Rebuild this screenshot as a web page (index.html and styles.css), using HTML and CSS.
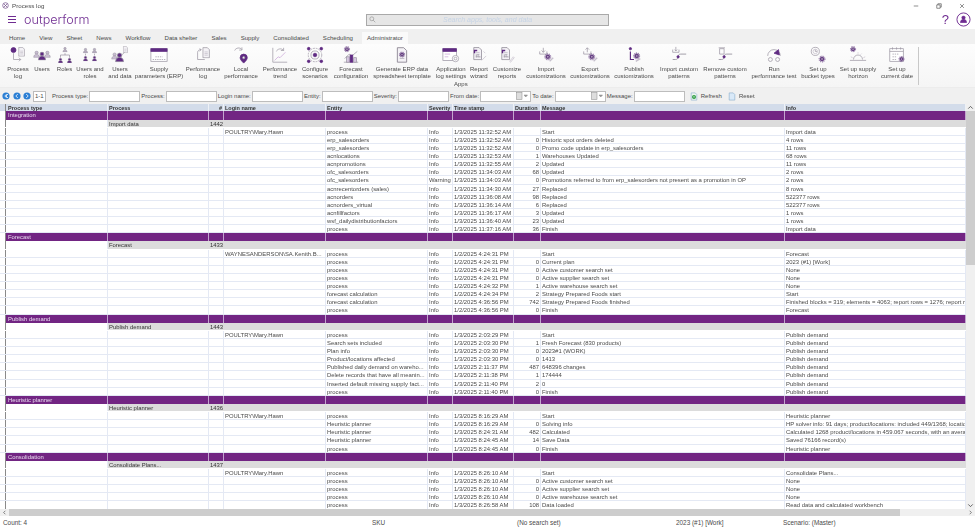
FILE: index.html
```html
<!DOCTYPE html>
<html>

<head>
    <meta charset="UTF-8">
    <title>Process log</title>
    <link rel="stylesheet" href="styles.css">
</head>

<body>
    <!-- Shared icon parts -->
    <svg class="defs">
        <symbol id="gear" viewBox="0 0 10 10">
            <circle cx="5" cy="5" r="3.2" fill="#5f2a82" />
            <circle cx="5" cy="5" r="4.3" fill="none" stroke="#5f2a82" stroke-width="1.2" stroke-dasharray="1.3 1.4" />
            <circle cx="5" cy="5" r="1" fill="#d9c9e4" />
        </symbol>
        <symbol id="person" viewBox="0 0 10 10">
            <circle cx="5" cy="3" r="2.2" />
            <path d="M1 9.6c0-6 8-6 8 0z" />
        </symbol>
        <symbol id="doc" viewBox="0 0 10 14">
            <path d="M1 .7h5.5L9 3.2v10H1z" fill="#f4f2f6" stroke="#8f8a96" stroke-width=".8" />
            <path d="M3 6h4M3 8h4M3 10h4" stroke="#b5b0bb" stroke-width=".7" />
        </symbol>
    </svg>

    <div class="titlebar">
        <div class="title">
            <svg class="app-icon" viewBox="0 0 10 10">
                <circle cx="5" cy="5" r="4" />
                <path d="M2.5 2.5l5 5M7.5 2.5l-5 5" />
            </svg>
            Process log
        </div>
        <div class="window-controls">
            <svg viewBox="0 0 8 8"><path d="M1 4h6" /></svg>
            <svg viewBox="0 0 8 8"><path d="M1 2.5h4.5V7H1zM2.5 2.5V1H7v4.5H5.5" /></svg>
            <svg viewBox="0 0 8 8"><path d="M1.5 1.5l5 5M6.5 1.5l-5 5" /></svg>
        </div>
    </div>

    <div class="appbar">
        <div class="brand">
            <div class="hamburger"><i></i><i></i><i></i></div>
            <div class="logo">outperform</div>
        </div>
        <div class="search">
            <svg viewBox="0 0 10 10"><circle cx="4" cy="4" r="2.8" /><path d="M6 6l3 3" /></svg>
            <span>Search apps, tools, and data</span>
        </div>
        <div class="account">
            <span class="help">?</span>
            <svg class="avatar" viewBox="0 0 16 16">
                <circle cx="8" cy="8" r="7" />
                <use href="#person" x="4" y="3.6" width="8" height="8" fill="#6f2c91" />
            </svg>
        </div>
    </div>

    <div class="tabs">
        <span>Home</span>
        <span>View</span>
        <span>Sheet</span>
        <span>News</span>
        <span>Workflow</span>
        <span>Data shelter</span>
        <span>Sales</span>
        <span>Supply</span>
        <span>Consolidated</span>
        <span>Scheduling</span>
        <span class="active">Administrator</span>
    </div>

    <div class="ribbon">
        <div class="tool">
            <svg viewBox="0 0 20 20"><circle cx="5" cy="4.5" r="2.8" class="p" /><use href="#doc" x="10" y="1" width="8" height="11" /><path d="M5 8v7h8M11 13l2 2-2 2" /></svg>
            <span>Process<br>log</span>
        </div>
        <div class="tool">
            <svg viewBox="0 0 20 20"><use href="#person" x="0" y="5" width="8" height="8" fill="#c9bdd2" /><use href="#person" x="12" y="5" width="8" height="8" fill="#c9bdd2" /><use href="#person" x="5" y="6" width="10" height="10" fill="#5f2a82" /></svg>
            <span>Users</span>
        </div>
        <div class="tool">
            <svg viewBox="0 0 20 20"><use href="#person" x="7" y="1" width="6" height="6" fill="#b9aec2" /><path d="M10 8v2M5 13v-3h10v3" /><use href="#person" x="2" y="13" width="6" height="6" fill="#5f2a82" /><use href="#person" x="12" y="13" width="6" height="6" fill="#5f2a82" /></svg>
            <span>Roles</span>
        </div>
        <div class="tool">
            <svg viewBox="0 0 20 20"><use href="#person" x="2" y="2" width="6" height="6" fill="#b9aec2" /><use href="#person" x="12" y="2" width="6" height="6" fill="#b9aec2" /><use href="#person" x="2" y="11" width="6" height="6" fill="#5f2a82" /><use href="#person" x="12" y="11" width="6" height="6" fill="#5f2a82" /><path d="M5 8.500v2M15 8.500v2" /></svg>
            <span>Users and<br>roles</span>
        </div>
        <div class="tool">
            <svg viewBox="0 0 20 20"><use href="#person" x="0" y="7" width="8" height="8" fill="#c9bdd2" /><use href="#person" x="4" y="7" width="11" height="11" fill="#5f2a82" /><use href="#doc" x="13" y="0" width="6" height="8" /><path d="M12 10l3-3" /></svg>
            <span>Users<br>and data</span>
        </div>
        <div class="tool">
            <svg viewBox="0 0 20 20"><rect x="1" y="3" width="18" height="14" fill="#fff" /><rect x="1" y="3" width="18" height="3" class="p" /><path d="M6 12h8M3 15h14" stroke-dasharray="1.500 1" /></svg>
            <span>Supply<br>parameters (ERP)</span>
        </div>
        <div class="tool">
            <svg viewBox="0 0 20 20"><use href="#doc" x="9" y="1" width="9" height="13" /><path d="M4 15v-8c0-2 2-3 4-3M6 3l2 1-2 2M4 15h8" /></svg>
            <span>Performance<br>log</span>
        </div>
        <div class="tool">
            <svg viewBox="0 0 20 20"><path d="M3 5c1-3 6-4 8-1M11 1.500v3H8" /><path d="M13 9a4 4 0 0 1 4 4c0 2-2 4-4 6-2-2-4-4-4-6a4 4 0 0 1 4-4z" class="p" /><circle cx="13" cy="13" r="1.200" fill="#fff" /></svg>
            <span>Local<br>performance</span>
        </div>
        <div class="tool">
            <svg viewBox="0 0 20 20"><path d="M2 2v16h16" /><path d="M4 16l4-4 2 1 6-6" stroke="#c9a5d8" /><path d="M6 6c1-3 6-4 8-1M14 2v3h-3" /></svg>
            <span>Performance<br>trend</span>
        </div>
        <div class="tool">
            <svg viewBox="0 0 20 20"><circle cx="10" cy="10" r="7.500" stroke-dasharray="2 1" /><circle cx="10" cy="10" r="4.500" /><circle cx="10" cy="10" r="2" class="p" /><circle cx="3" cy="3" r="1.500" class="p" /><circle cx="17" cy="3" r="1.500" class="p" /><circle cx="3" cy="17" r="1.500" class="p" /><circle cx="17" cy="17" r="1.500" class="p" /></svg>
            <span>Configure<br>scenarios</span>
        </div>
        <div class="tool">
            <svg viewBox="0 0 20 20"><use href="#gear" x="2" y="0" width="7" height="7" /><path d="M2 18h16M3 14l5-5 3 2 6-5" /><rect x="5" y="12" width="3" height="6" fill="#d9c9e4" /><rect x="9" y="10" width="3" height="8" class="p" /><rect x="13" y="13" width="3" height="5" fill="#d9c9e4" /></svg>
            <span>Forecast<br>configuration</span>
        </div>
        <div class="tool">
            <svg viewBox="0 0 20 20"><use href="#doc" x="3" y="1" width="14" height="18" /><use href="#gear" x="6.500" y="6" width="7" height="7" /></svg>
            <span>Generate ERP data<br>spreadsheet template</span>
        </div>
        <div class="tool">
            <svg viewBox="0 0 20 20"><rect x="1" y="3" width="15" height="13" fill="#fff" /><rect x="1" y="3" width="15" height="3" class="p" /><path d="M3 9h6M3 12h4" stroke="#c9a5d8" /><circle cx="15" cy="14" r="3.500" fill="#fff" /><circle cx="15" cy="14" r="1.500" /></svg>
            <span>Application<br>log settings</span>
        </div>
        <div class="tool">
            <svg viewBox="0 0 20 20"><use href="#doc" x="3" y="1" width="11" height="15" /><path d="M5 8V5h3" stroke="#5f2a82" stroke-width="1.500" /><path d="M7 13v-3M9 13V9M11 13v-2" /><path d="M13 16l5-5M15 6l2 2" stroke="#c6bfcc" /></svg>
            <span>Report<br>wizard</span>
        </div>
        <div class="tool">
            <svg viewBox="0 0 20 20"><use href="#doc" x="3" y="1" width="11" height="15" /><path d="M5 8V5h3" stroke="#5f2a82" stroke-width="1.500" /><path d="M7 13v-3M9 13V9M11 13v-2" /><path d="M13 17l4-5 1 1-4 5z" stroke="#c6bfcc" /></svg>
            <span>Customize<br>reports</span>
        </div>
        <div class="tool">
            <svg viewBox="0 0 20 20"><path d="M3 6v3h8V6M7 2v5M5 5l2 2 2-2" /><use href="#gear" x="8" y="8" width="8" height="8" /><path d="M14 17l4-4" stroke="#c6bfcc" stroke-width="1.500" /></svg>
            <span>Import<br>customizations</span>
        </div>
        <div class="tool">
            <svg viewBox="0 0 20 20"><path d="M3 6v3h8V6M7 7V2M5 4l2-2 2 2" /><use href="#gear" x="8" y="8" width="8" height="8" /><path d="M14 17l4-4" stroke="#c6bfcc" stroke-width="1.500" /></svg>
            <span>Export<br>customizations</span>
        </div>
        <div class="tool">
            <svg viewBox="0 0 20 20"><circle cx="6" cy="3" r="1.300" class="p" /><path d="M6 6v9h4" stroke="#5f2a82" stroke-width="1.300" /><use href="#gear" x="9" y="7" width="8" height="8" /><path d="M12 17l5-3" stroke="#c6bfcc" stroke-width="1.500" /></svg>
            <span>Publish<br>customizations</span>
        </div>
        <div class="tool">
            <svg viewBox="0 0 20 20"><path d="M3 4v3h7V4M6.500 1v4.500M5 4l1.500 1.500L8 4" /><path d="M18 9h-6c-2 0-3 1-3 3s-1 3-3 3H3" stroke-width="1" /><circle cx="9" cy="12" r="1.300" class="p" /></svg>
            <span>Import custom<br>patterns</span>
        </div>
        <div class="tool">
            <svg viewBox="0 0 20 20"><path d="M4 3h5v6H4zM3 2h7" /><path d="M18 9h-6c-2 0-3 1-3 3s-1 3-3 3H3" stroke-width="1" /><circle cx="9" cy="12" r="1.300" class="p" /></svg>
            <span>Remove custom<br>patterns</span>
        </div>
        <div class="tool">
            <svg viewBox="0 0 20 20"><path d="M3 11a7 7 0 0 1 14 0" /><path d="M10 8l5-4 1 6z" class="p" /><circle cx="6" cy="15" r="2.200" /><circle cx="14" cy="15" r="2.200" /></svg>
            <span>Run<br>performance test</span>
        </div>
        <div class="tool">
            <svg viewBox="0 0 20 20"><circle cx="7" cy="6" r="4.500" /><circle cx="7" cy="6" r="2.500" stroke="#c6bfcc" /><path d="M7 4v2h2" /><use href="#gear" x="10.500" y="10.500" width="8" height="8" /></svg>
            <span>Set up<br>bucket types</span>
        </div>
        <div class="tool">
            <svg viewBox="0 0 20 20"><use href="#gear" x="1" y="0" width="7" height="7" /><path d="M5 15a5 5 0 0 1 10 0M1 16h18" /><path d="M2 12l2 1M18 12l-2 1M10 7v1.500M14 8.500l-1 1" stroke="#c6bfcc" /></svg>
            <span>Set up supply<br>horizon</span>
        </div>
        <div class="tool">
            <svg viewBox="0 0 20 20"><rect x="2" y="3" width="15" height="14" fill="#fff" /><path d="M2 6h15M5 1.500V4M9.500 1.500V4M14 1.500V4" /><path d="M5 9h7M5 12h5M5 15h4" stroke-dasharray="1.500 1" /><use href="#gear" x="11.500" y="11" width="7" height="7" /></svg>
            <span>Set up<br>current date</span>
        </div>
        <div class="apps-label">Apps</div>
    </div>

    <div class="toolbar">
        <div class="nav">
            <svg viewBox="0 0 10 10"><circle cx="5" cy="5" r="4.500" /><path d="M6 2.500L3.500 5 6 7.500M7.500 2.500L5 5l2.500 2.500" /></svg>
            <svg viewBox="0 0 10 10"><circle cx="5" cy="5" r="4.500" /><path d="M6 2.500L3.500 5 6 7.500" /></svg>
            <svg viewBox="0 0 10 10"><circle cx="5" cy="5" r="4.500" /><path d="M4 2.500L6.500 5 4 7.500" /></svg>
        </div>
        <div class="page-box">1-1</div>
        <label class="field">Process type:<span class="box"></span></label>
        <label class="field">Process:<span class="box"></span></label>
        <label class="field">Login name:<span class="box"></span></label>
        <label class="field">Entity:<span class="box"></span></label>
        <label class="field">Severity:<span class="box"></span></label>
        <label class="field">From date:<span class="box date"><svg viewBox="0 0 12 8"><rect x=".5" y=".5" width="5.500" height="7" /><path d="M8 3h3.500L9.750 5z" /></svg></span></label>
        <label class="field">To date:<span class="box date"><svg viewBox="0 0 12 8"><rect x=".5" y=".5" width="5.500" height="7" /><path d="M8 3h3.500L9.750 5z" /></svg></span></label>
        <label class="field">Message:<span class="box"></span></label>
        <div class="action refresh">
            <svg viewBox="0 0 10 10"><path d="M1.500.5h5L8.500 2.500v7h-7z" fill="#eef6ee" stroke="#7fa7c9" stroke-width=".7" /><circle cx="5" cy="5.500" r="2.500" fill="#2f9e44" /><path d="M3.800 5.500h2.400" stroke="#fff" stroke-width=".8" /></svg>
            Refresh
        </div>
        <div class="action">
            <svg viewBox="0 0 10 10"><path d="M1.500.5h5L8.500 2.500v7h-7z" fill="#d9e9f8" stroke="#7fa7c9" stroke-width=".7" /></svg>
            Reset
        </div>
    </div>

    <div class="grid">
        <div class="rows">
            <div class="row head"><span>Process type</span><span>Process</span><span class="num">#</span><span>Login name</span><span>Entity</span><span>Severity</span><span>Time stamp</span><span>Duration</span><span>Message</span><span>Info</span></div>

            <div class="row group"><span>Integration</span><span></span><span></span><span></span><span></span><span></span><span></span><span></span><span></span><span></span></div>
            <div class="row sub"><span></span><span>Import data</span><span class="num">1442</span><span></span><span></span><span></span><span></span><span></span><span></span><span></span></div>
            <div class="row"><span></span><span></span><span></span><span>POULTRY\Mary.Hawn</span><span>process</span><span>Info</span><span>1/3/2025 11:32:52 AM</span><span class="num"></span><span>Start</span><span>Import data</span></div>
            <div class="row"><span></span><span></span><span></span><span></span><span>erp_salesorders</span><span>Info</span><span>1/3/2025 11:32:52 AM</span><span class="num">0</span><span>Historic spot orders deleted</span><span>4 rows</span></div>
            <div class="row"><span></span><span></span><span></span><span></span><span>erp_salesorders</span><span>Info</span><span>1/3/2025 11:32:52 AM</span><span class="num">0</span><span>Promo code update in erp_salesorders</span><span>11 rows</span></div>
            <div class="row"><span></span><span></span><span></span><span></span><span>acnlocations</span><span>Info</span><span>1/3/2025 11:32:53 AM</span><span class="num">1</span><span>Warehouses Updated</span><span>68 rows</span></div>
            <div class="row"><span></span><span></span><span></span><span></span><span>acnpromotions</span><span>Info</span><span>1/3/2025 11:32:55 AM</span><span class="num">2</span><span>Updated</span><span>11 rows</span></div>
            <div class="row"><span></span><span></span><span></span><span></span><span>ofc_salesorders</span><span>Info</span><span>1/3/2025 11:34:03 AM</span><span class="num">68</span><span>Updated</span><span>2 rows</span></div>
            <div class="row"><span></span><span></span><span></span><span></span><span>ofc_salesorders</span><span>Warning</span><span>1/3/2025 11:34:03 AM</span><span class="num">0</span><span>Promotions referred to from erp_salesorders not present as a promotion in OP</span><span>2 rows</span></div>
            <div class="row"><span></span><span></span><span></span><span></span><span>acnrecentorders (sales)</span><span>Info</span><span>1/3/2025 11:34:30 AM</span><span class="num">27</span><span>Replaced</span><span>8 rows</span></div>
            <div class="row"><span></span><span></span><span></span><span></span><span>acnorders</span><span>Info</span><span>1/3/2025 11:36:08 AM</span><span class="num">98</span><span>Replaced</span><span>522377 rows</span></div>
            <div class="row"><span></span><span></span><span></span><span></span><span>acnorders_virtual</span><span>Info</span><span>1/3/2025 11:36:14 AM</span><span class="num">6</span><span>Replaced</span><span>522377 rows</span></div>
            <div class="row"><span></span><span></span><span></span><span></span><span>acnfillfactors</span><span>Info</span><span>1/3/2025 11:36:17 AM</span><span class="num">3</span><span>Updated</span><span>1 rows</span></div>
            <div class="row"><span></span><span></span><span></span><span></span><span>wsf_dailydistributionfactors</span><span>Info</span><span>1/3/2025 11:36:40 AM</span><span class="num">23</span><span>Updated</span><span>1 rows</span></div>
            <div class="row"><span></span><span></span><span></span><span></span><span>process</span><span>Info</span><span>1/3/2025 11:37:16 AM</span><span class="num">36</span><span>Finish</span><span>Import data</span></div>

            <div class="row group"><span>Forecast</span><span></span><span></span><span></span><span></span><span></span><span></span><span></span><span></span><span></span></div>
            <div class="row sub"><span></span><span>Forecast</span><span class="num">1433</span><span></span><span></span><span></span><span></span><span></span><span></span><span></span></div>
            <div class="row"><span></span><span></span><span></span><span>WAYNESANDERSON\SA.Kenith.B...</span><span>process</span><span>Info</span><span>1/2/2025 4:24:31 PM</span><span class="num"></span><span>Start</span><span>Forecast</span></div>
            <div class="row"><span></span><span></span><span></span><span></span><span>process</span><span>Info</span><span>1/2/2025 4:24:31 PM</span><span class="num">0</span><span>Current plan</span><span>2023 (#1) [Work]</span></div>
            <div class="row"><span></span><span></span><span></span><span></span><span>process</span><span>Info</span><span>1/2/2025 4:24:31 PM</span><span class="num">0</span><span>Active customer search set</span><span>None</span></div>
            <div class="row"><span></span><span></span><span></span><span></span><span>process</span><span>Info</span><span>1/2/2025 4:24:31 PM</span><span class="num">0</span><span>Active supplier search set</span><span>None</span></div>
            <div class="row"><span></span><span></span><span></span><span></span><span>process</span><span>Info</span><span>1/2/2025 4:24:32 PM</span><span class="num">1</span><span>Active warehouse search set</span><span>None</span></div>
            <div class="row"><span></span><span></span><span></span><span></span><span>forecast calculation</span><span>Info</span><span>1/2/2025 4:24:34 PM</span><span class="num">2</span><span>Strategy Prepared Foods start</span><span>Start</span></div>
            <div class="row"><span></span><span></span><span></span><span></span><span>forecast calculation</span><span>Info</span><span>1/2/2025 4:36:56 PM</span><span class="num">742</span><span>Strategy Prepared Foods finished</span><span>Finished blocks = 319; elements = 4063; report rows = 1276; report rows = 1276</span></div>
            <div class="row"><span></span><span></span><span></span><span></span><span>process</span><span>Info</span><span>1/2/2025 4:36:56 PM</span><span class="num">0</span><span>Finish</span><span>Forecast</span></div>

            <div class="row group"><span>Publish demand</span><span></span><span></span><span></span><span></span><span></span><span></span><span></span><span></span><span></span></div>
            <div class="row sub"><span></span><span>Publish demand</span><span class="num">1443</span><span></span><span></span><span></span><span></span><span></span><span></span><span></span></div>
            <div class="row"><span></span><span></span><span></span><span>POULTRY\Mary.Hawn</span><span>process</span><span>Info</span><span>1/3/2025 2:03:29 PM</span><span class="num"></span><span>Start</span><span>Publish demand</span></div>
            <div class="row"><span></span><span></span><span></span><span></span><span>Search sets included</span><span>Info</span><span>1/3/2025 2:03:30 PM</span><span class="num">1</span><span>Fresh Forecast (830 products)</span><span>Publish demand</span></div>
            <div class="row"><span></span><span></span><span></span><span></span><span>Plan info</span><span>Info</span><span>1/3/2025 2:03:30 PM</span><span class="num">0</span><span>2023#1 (WORK)</span><span>Publish demand</span></div>
            <div class="row"><span></span><span></span><span></span><span></span><span>Product/locations affected</span><span>Info</span><span>1/3/2025 2:03:30 PM</span><span class="num">0</span><span>1413</span><span>Publish demand</span></div>
            <div class="row"><span></span><span></span><span></span><span></span><span>Published daily demand on wareho...</span><span>Info</span><span>1/3/2025 2:11:37 PM</span><span class="num">487</span><span>648396 changes</span><span>Publish demand</span></div>
            <div class="row"><span></span><span></span><span></span><span></span><span>Delete records that have all meanin...</span><span>Info</span><span>1/3/2025 2:11:38 PM</span><span class="num">1</span><span>174444</span><span>Publish demand</span></div>
            <div class="row"><span></span><span></span><span></span><span></span><span>Inserted default missing supply fact...</span><span>Info</span><span>1/3/2025 2:11:40 PM</span><span class="num">2</span><span>0</span><span>Publish demand</span></div>
            <div class="row"><span></span><span></span><span></span><span></span><span>process</span><span>Info</span><span>1/3/2025 2:11:40 PM</span><span class="num">0</span><span>Finish</span><span>Publish demand</span></div>

            <div class="row group"><span>Heuristic planner</span><span></span><span></span><span></span><span></span><span></span><span></span><span></span><span></span><span></span></div>
            <div class="row sub"><span></span><span>Heuristic planner</span><span class="num">1436</span><span></span><span></span><span></span><span></span><span></span><span></span><span></span></div>
            <div class="row"><span></span><span></span><span></span><span>POULTRY\Mary.Hawn</span><span>process</span><span>Info</span><span>1/3/2025 8:16:29 AM</span><span class="num"></span><span>Start</span><span>Heuristic planner</span></div>
            <div class="row"><span></span><span></span><span></span><span></span><span>Heuristic planner</span><span>Info</span><span>1/3/2025 8:16:29 AM</span><span class="num">0</span><span>Solving info</span><span>HP solver info: 91 days; product/locations: included 449/1368; locations: included</span></div>
            <div class="row"><span></span><span></span><span></span><span></span><span>Heuristic planner</span><span>Info</span><span>1/3/2025 8:24:31 AM</span><span class="num">482</span><span>Calculated</span><span>Calculated 1268 product/locations in 459.067 seconds, with an average of</span></div>
            <div class="row"><span></span><span></span><span></span><span></span><span>Heuristic planner</span><span>Info</span><span>1/3/2025 8:24:45 AM</span><span class="num">14</span><span>Save Data</span><span>Saved 76166 record(s)</span></div>
            <div class="row"><span></span><span></span><span></span><span></span><span>process</span><span>Info</span><span>1/3/2025 8:24:45 AM</span><span class="num">0</span><span>Finish</span><span>Heuristic planner</span></div>

            <div class="row group"><span>Consolidation</span><span></span><span></span><span></span><span></span><span></span><span></span><span></span><span></span><span></span></div>
            <div class="row sub"><span></span><span>Consolidate Plans...</span><span class="num">1437</span><span></span><span></span><span></span><span></span><span></span><span></span><span></span></div>
            <div class="row"><span></span><span></span><span></span><span>POULTRY\Mary.Hawn</span><span>process</span><span>Info</span><span>1/3/2025 8:26:10 AM</span><span class="num"></span><span>Start</span><span>Consolidate Plans...</span></div>
            <div class="row"><span></span><span></span><span></span><span></span><span>process</span><span>Info</span><span>1/3/2025 8:26:10 AM</span><span class="num">0</span><span>Active customer search set</span><span>None</span></div>
            <div class="row"><span></span><span></span><span></span><span></span><span>process</span><span>Info</span><span>1/3/2025 8:26:10 AM</span><span class="num">0</span><span>Active supplier search set</span><span>None</span></div>
            <div class="row"><span></span><span></span><span></span><span></span><span>process</span><span>Info</span><span>1/3/2025 8:26:10 AM</span><span class="num">0</span><span>Active warehouse search set</span><span>None</span></div>
            <div class="row"><span></span><span></span><span></span><span></span><span>process</span><span>Info</span><span>1/3/2025 8:26:58 AM</span><span class="num">108</span><span>Data loaded</span><span>Read data and calculated workbench</span></div>
        </div>
        <div class="vscroll">
            <svg viewBox="0 0 8 6"><path d="M2 4l2-2 2 2" /></svg>
            <div class="vthumb"></div>
            <svg viewBox="0 0 8 6"><path d="M2 2l2 2 2-2" /></svg>
        </div>
    </div>

    <div class="hscroll">
        <svg viewBox="0 0 6 8"><path d="M4 2L2 4l2 2" /></svg>
        <div class="hthumb"></div>
        <svg viewBox="0 0 6 8"><path d="M2 2l2 2-2 2" /></svg>
    </div>

    <div class="statusbar">
        <span>Count: 4</span>
        <span>SKU</span>
        <span>(No search set)</span>
        <span>2023 (#1) [Work]</span>
        <span>Scenario: (Master)</span>
    </div>
</body>

</html>
```

FILE: styles.css
```css
body {
    margin: 0;
    width: 975px;
    height: 528px;
    overflow: hidden;
    display: flex;
    flex-direction: column;
    background: #fff;
    color: #4a4a4a;
    font-family: 'Liberation Sans', Arial, sans-serif;
    font-size: 6px;
    filter: blur(.3px);
}

.defs {
    display: none;
}

/* Title bar */
.titlebar {
    height: 10px;
    flex: none;
    display: flex;
    justify-content: space-between;
    align-items: center;
}

.title {
    display: flex;
    align-items: center;
    gap: 3px;
    padding-left: 2px;
    font-size: 6.2px;
}

.app-icon {
    width: 7px;
    height: 7px;
    fill: none;
    stroke: #6f4a86;
    stroke-width: 1;
}

.window-controls {
    display: flex;
    gap: 17px;
    padding: 1px 10px 0 0;
}

.window-controls svg {
    width: 6px;
    height: 6px;
    fill: none;
    stroke: #444;
    stroke-width: .8;
}

/* App bar */
.appbar {
    height: 19px;
    flex: none;
    display: grid;
    grid-template-columns: 366px 243px 1fr;
    align-items: center;
}

.brand {
    display: flex;
    align-items: center;
    gap: 8px;
    padding-left: 8px;
}

.hamburger {
    display: flex;
    flex-direction: column;
    gap: 2px;
    width: 8px;
}

.hamburger i {
    height: 1px;
    background: #6f2c91;
}

.logo {
    font-family: Inter, 'Liberation Sans', sans-serif;
    font-weight: 300;
    font-size: 12.600px;
    line-height: 16px;
    color: #6f2c91;
}

.search {
    height: 12px;
    box-sizing: border-box;
    border: 1px solid #a9a9a9;
    background: #e6e6e6;
    display: flex;
    align-items: center;
    gap: 67px;
    padding-left: 2px;
    color: #c6d4e6;
    font-style: italic;
    font-size: 7px;
}

.search svg {
    width: 7px;
    height: 7px;
    fill: none;
    stroke: #999;
}

.account {
    display: flex;
    justify-content: flex-end;
    align-items: center;
    gap: 7px;
    padding-right: 4px;
}

.help {
    color: #6f2c91;
    font-size: 13px;
    line-height: 14px;
}

.avatar {
    width: 15px;
    height: 15px;
    fill: none;
    stroke: #6f2c91;
    stroke-width: 1;
}

/* Tabs */
.tabs {
    height: 15px;
    flex: none;
    display: flex;
    background: #f0f0f0;
    padding-left: 2px;
    padding-top: 3px;
    box-sizing: border-box;
}

.tabs span {
    padding: 0 7px;
    line-height: 12px;
    font-size: 6.100px;
}

.tabs .active {
    background: #fafafa;
    padding: 0 5px;
    margin-left: 2px;
}

/* Ribbon */
.ribbon {
    height: 44px;
    flex: none;
    position: relative;
    box-sizing: border-box;
    padding: 2px 0 0 6px;
    display: grid;
    grid-template-columns: 24px 24px 21px 30px 30px 48px 40px 36px 42px 28px 44px 58px 40px 16px 40px 38px 50px 38px 52px 40px 58px 30px 50px 28px;
    background: linear-gradient(#fdfdfd, #f5f5f5);
    border-bottom: 1px solid #ececec;
}

.ribbon::after {
    content: '';
    position: absolute;
    left: 918px;
    top: 3px;
    height: 38px;
    width: 1px;
    background: #c8c8c8;
}

.tool {
    display: flex;
    flex-direction: column;
    align-items: center;
    min-width: 0;
    gap: 2px;
    text-align: center;
    white-space: nowrap;
    line-height: 7px;
}

.tool svg {
    width: 18px;
    height: 18px;
    flex: none;
    fill: none;
    stroke: #9a95a2;
    stroke-width: .8;
}

.tool .p {
    fill: #5f2a82;
    stroke: #5f2a82;
}

.apps-label {
    position: absolute;
    left: 454px;
    top: 37px;
    line-height: 7px;
}

/* Filter toolbar */
.toolbar {
    height: 16px;
    flex: none;
    box-sizing: border-box;
    display: flex;
    align-items: center;
    gap: 1.100px;
    padding: 0 0 0 2px;
    background: #f0f0f0;
}

.nav {
    display: flex;
    gap: 2.500px;
}

.nav svg {
    width: 8px;
    height: 8px;
    fill: #2b7fd4;
    stroke: none;
}

.nav path {
    fill: none;
    stroke: #fff;
    stroke-width: 1;
}

.page-box {
    width: 13px;
    height: 11px;
    margin-left: .700px;
    margin-right: 5px;
    box-sizing: border-box;
    border: 1px solid #bbb;
    background: #fff;
    line-height: 9px;
    text-align: center;
}

.field {
    display: flex;
    align-items: center;
    gap: 1px;
    white-space: nowrap;
}

.box {
    width: 51px;
    height: 11px;
    box-sizing: border-box;
    border: 1px solid #bdbdbd;
    background: #fff;
    display: flex;
    align-items: center;
    justify-content: flex-end;
}

.date svg {
    width: 12px;
    height: 8px;
    margin-right: 2px;
    fill: #999;
    stroke: #888;
    stroke-width: .5;
}

.date rect {
    fill: #ddd;
}

.action {
    display: flex;
    align-items: center;
    gap: 3px;
    margin-left: 5px;
}

.action.refresh {
    margin-left: 4px;
}

.action svg {
    width: 8px;
    height: 9px;
}

/* Log grid */
.grid {
    flex: 1;
    min-height: 0;
    display: flex;
    overflow: hidden;
}

.rows {
    width: 966px;
    flex: none;
    overflow: hidden;
}

.row {
    height: 8.130px;
    box-sizing: border-box;
    padding-left: 5px;
    display: grid;
    grid-template-columns: 103px 101px 15px 102px 102px 25px 61px 27px 244px 181px;
    border-bottom: 1px solid #e4e9f4;
    background: #fff;
}

.row span {
    overflow: hidden;
    white-space: nowrap;
    box-sizing: border-box;
    padding: 0 1px;
    line-height: 8.500px;
    font-size: 5.900px;
    border-right: 1px solid #e4e9f4;
}

.row span:first-child {
    border-left: 1px solid #8a8a8a;
    padding-left: 2px;
}

.row .num {
    text-align: right;
}

.row.head {
    height: 7.400px;
    background: #d3dcea;
    border-bottom: 0;
}

.row.head span {
    font-weight: bold;
    font-size: 5.500px;
    color: #333;
    border-right-color: #eef1f6;
    line-height: 8.400px;
}

.row.head span:first-child {
    border-left: 1px solid #8a8a8a;
}

.row.group {
    border-bottom: 0;
}

.row.group span {
    background: #722583;
    color: #e8dcee;
    border-right-color: #c3a5cf;
    line-height: 9px;
}

.row.sub {
    border-bottom-color: #fff;
}

.row.sub span {
    background: #dcdcdc;
    border-right: 0;
    color: #333;
}

.row.sub span:first-child {
    background: #fff;
    border-right: 1px solid #e4e9f4;
}

.vscroll {
    flex: 1;
    display: flex;
    flex-direction: column;
    background: #f0f0f0;
}

.vscroll svg {
    width: 9px;
    height: 7px;
    flex: none;
    fill: none;
    stroke: #555;
    stroke-width: .8;
}

.vthumb {
    height: 154px;
    background: #cdcdcd;
    margin-bottom: auto;
}

.hscroll {
    height: 7px;
    flex: none;
    display: flex;
    align-items: center;
    background: #f0f0f0;
}

.hscroll svg {
    width: 9px;
    height: 7px;
    flex: none;
    fill: none;
    stroke: #555;
    stroke-width: .8;
}

.hthumb {
    width: 891px;
    height: 7px;
    background: #cdcdcd;
    margin-right: auto;
}

.statusbar {
    height: 12px;
    flex: none;
    display: grid;
    grid-template-columns: 369px 145px 159px 107px 1fr;
    align-items: center;
    padding-left: 3px;
    font-size: 6.400px;
    background: #fff;
}
```
